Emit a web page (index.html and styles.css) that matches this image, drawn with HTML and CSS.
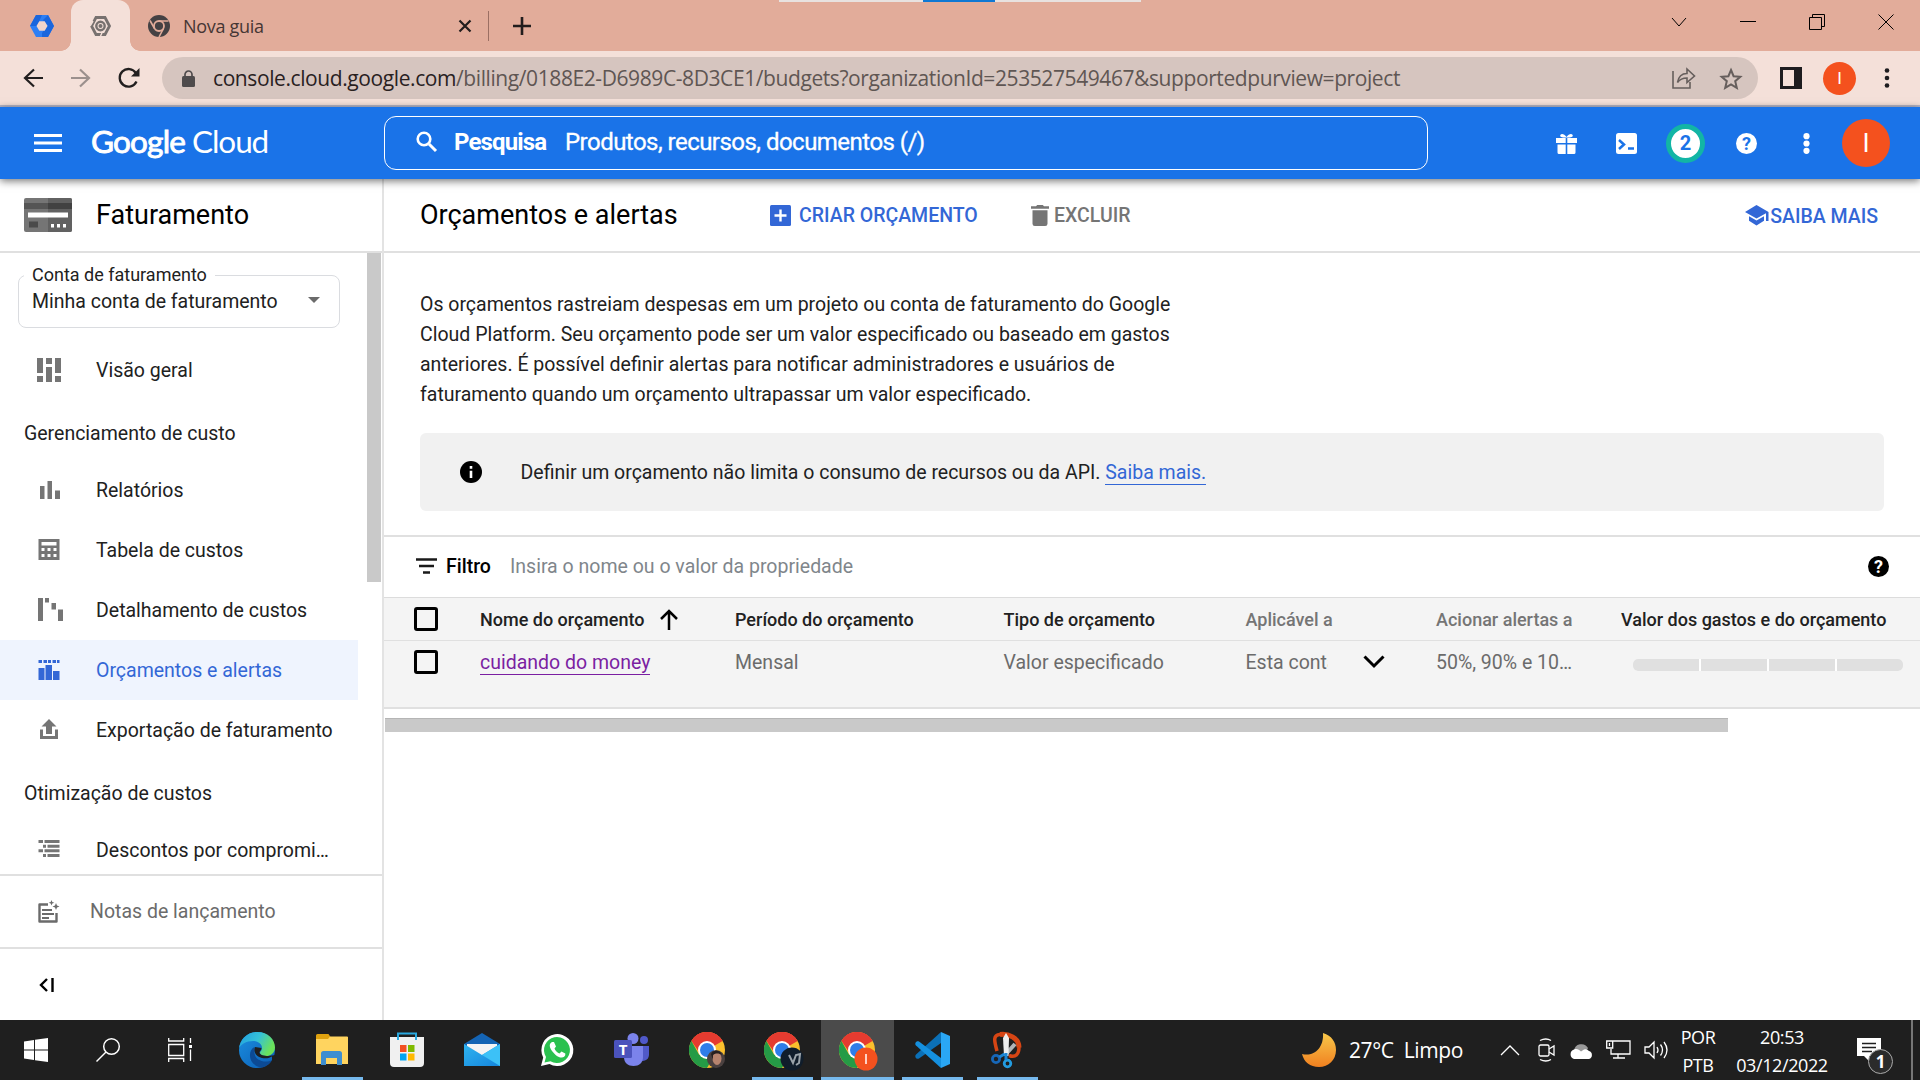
FILE: index.html
```html
<!DOCTYPE html>
<html lang="pt-BR">
<head>
<meta charset="utf-8">
<title>Orçamentos e alertas – Faturamento</title>
<link rel="stylesheet" href="styles.css">
</head>
<body>
<svg width="0" height="0" class="defs">
  <defs>
    <linearGradient id="edge-a" x1="0" y1="0" x2="1" y2=".4"><stop offset="0" stop-color="#1f9de0"/><stop offset=".55" stop-color="#35c1d8"/><stop offset="1" stop-color="#6be25a"/></linearGradient>
    <linearGradient id="edge-b" x1="0" y1="0" x2="1" y2="1"><stop offset="0" stop-color="#1b8fe0"/><stop offset="1" stop-color="#0b5db4"/></linearGradient>
    <linearGradient id="mail-a" x1="0" y1="0" x2="1" y2="1"><stop offset="0" stop-color="#2fb4f0"/><stop offset="1" stop-color="#1585dc"/></linearGradient>
    <linearGradient id="moon-a" x1="0" y1="0" x2="0" y2="1"><stop offset="0" stop-color="#f8c84a"/><stop offset="1" stop-color="#f08020"/></linearGradient>
    <symbol id="chrome" viewBox="0 0 36 36">
      <circle cx="18" cy="18" r="18" fill="#fbc02d"/>
      <path d="M18 18 2.4 9A18 18 0 0 1 33.6 9z" fill="#e53b30"/>
      <path d="M18 9h15.6A18 18 0 0 0 2.4 9L10 20z" fill="#e53b30"/>
      <path d="M2.4 9A18 18 0 0 0 18 36l8-13.500-8 4.500-8-4.500z" fill="#259b46"/>
      <circle cx="18" cy="18" r="9" fill="#fff"/><circle cx="18" cy="18" r="7" fill="#2f7de9"/>
    </symbol>
  </defs>
</svg>

<header class="tabstrip">
  <svg class="tab-icon" width="24" height="24" viewBox="0 0 24 24"><path d="M6 1h12l6 11-6 11H6L0 12z" fill="#2d7ff5"/><path d="M6 1h6l-5 11H0zM18 1l6 11h-6l-5-6zM12 23h6l6-11h-7l-5 7z" fill="#1a66dd"/><path d="M9.300 7.300h5.400l2.800 4.700-2.800 4.700H9.300L6.500 12z" fill="#f1d5cb"/></svg>
  <div class="active-tab"><svg width="21" height="20" viewBox="0 0 21 20"><path d="M6 1.500h9L19.500 10 15 18.500H6L1.500 10z" fill="none" stroke="#77716f" stroke-width="2.800"/><circle cx="10.500" cy="10" r="4.200" fill="none" stroke="#77716f" stroke-width="2.400"/><circle cx="10.500" cy="10" r="1.500" fill="#f4e0d9"/><circle cx="10.500" cy="10" r="2" fill="#77716f"/><path d="M3 5l-3 5M12 17l-1.500 3" stroke="#f4e0d9" stroke-width="1.500"/></svg></div>
  <svg class="ntp-icon" width="22" height="22" viewBox="0 0 22 22"><circle cx="11" cy="11" r="11" fill="#454143"/><path d="M11 6h9.500M6.500 13.500 2 5.500M15.500 13.500 11 22" stroke="#e2ac9a" stroke-width="1.600"/><circle cx="11" cy="11" r="5" fill="#454143" stroke="#e2ac9a" stroke-width="1.800"/></svg>
  <span class="tab-title">Nova guia</span>
  <svg class="tab-close" width="14" height="14" viewBox="0 0 14 14"><path d="m1.500 1.500 11 11m0-11-11 11" stroke="#221d1d" stroke-width="2.200"/></svg>
  <i class="tab-sep"></i>
  <svg width="18" height="18" viewBox="0 0 18 18"><path d="M9 0v18M0 9h18" stroke="#221d1d" stroke-width="2.600"/></svg>
  <div class="share-bar"><i></i></div>
  <div class="window-controls">
    <svg width="16" height="16" viewBox="0 0 16 16"><path d="m1 4 7 8 7-8"/></svg>
    <svg width="16" height="16" viewBox="0 0 16 16"><path d="M0 7.500h16"/></svg>
    <svg width="16" height="16" viewBox="0 0 16 16"><path d="M.5 3.500h12v12H.5zM3.500 3.500v-3h12v12h-3"/></svg>
    <svg width="16" height="16" viewBox="0 0 16 16"><path d="m.5.5 15 15m0-15-15 15"/></svg>
  </div>
</header>

<nav class="toolbar">
  <svg class="nav-back" width="20" height="20" viewBox="0 0 20 20"><path d="M20 10H2m9-8.500L2 10l9 8.500" fill="none" stroke="#221f1f" stroke-width="2.200"/></svg>
  <svg class="nav-fwd" width="20" height="20" viewBox="0 0 20 20"><path d="M0 10h18M9 1.500l9 8.500-9 8.500" fill="none" stroke="#9b908d" stroke-width="2.200"/></svg>
  <svg class="nav-reload" width="22" height="22" viewBox="0 0 22 22"><path d="M18.500 14.500a8.800 8.800 0 1 1-.6-8.500" fill="none" stroke="#221f1f" stroke-width="2.300"/><path d="M21.500 1v8.500H13z" fill="#221f1f"/></svg>
  <div class="omnibox">
    <svg width="13" height="17" viewBox="0 0 13 17"><rect y="6" width="13" height="11" rx="1.500" fill="#4f4b4c"/><path d="M3 7V4.500a3.500 3.500 0 0 1 7 0V7" fill="none" stroke="#4f4b4c" stroke-width="1.700"/></svg>
    <span class="url"><b>console.cloud.google.com</b>/billing/0188E2-D6989C-8D3CE1/budgets?organizationId=253527549467&amp;supportedpurview=project</span>
    <svg class="share" width="24" height="22" viewBox="0 0 24 22"><path d="M1 4v17h17v-6M5.500 15.500C6.500 9.500 10 6.500 15 6.500V2l7.500 7-7.500 6.500V11c-4 0-7 1-9.500 4.500z" fill="none" stroke="#665e5c" stroke-width="1.600"/></svg>
    <svg width="22" height="21" viewBox="0 0 22 21"><path d="m11 2 2.600 6.200 6.700.6-5.100 4.400 1.600 6.600-5.800-3.500-5.800 3.500 1.600-6.600-5.100-4.400 6.700-.6z" fill="none" stroke="#665e5c" stroke-width="2"/></svg>
  </div>
  <svg class="panel" width="22" height="22" viewBox="0 0 22 22"><path d="M1.500 1.500h19v19h-19z" fill="none" stroke="#1d1c1f" stroke-width="3"/><path d="M14 0h8v22h-8z" fill="#1d1c1f"/></svg>
  <span class="profile">I</span>
  <svg width="6" height="20" viewBox="0 0 6 20" fill="#1d1c1f"><circle cx="3" cy="2.500" r="2.300"/><circle cx="3" cy="10" r="2.300"/><circle cx="3" cy="17.500" r="2.300"/></svg>
</nav>

<div class="gc-header">
  <svg class="burger" width="28" height="18" viewBox="0 0 28 18"><path d="M0 1.500h28M0 9h28M0 16.500h28" stroke="#fff" stroke-width="2.800"/></svg>
  <span class="logo"><b>Google</b> Cloud</span>
  <div class="search">
    <svg width="22" height="22" viewBox="0 0 22 22"><circle cx="8" cy="8" r="6.300" fill="none" stroke="#fff" stroke-width="2.600"/><path d="m13 13 7 7" stroke="#fff" stroke-width="3"/></svg>
    <b>Pesquisa</b><span>Produtos, recursos, documentos (/)</span>
  </div>
  <div class="gc-actions">
    <svg width="21" height="21" viewBox="0 0 21 21"><path d="M0 5h9.700v5H0zM11.300 5H21v5h-9.700zM1.500 11.500h8.200V21H3a1.500 1.500 0 0 1-1.500-1.500zM11.300 11.500h8.200v8A1.500 1.500 0 0 1 18 21h-6.700z" fill="#fff"/><path d="M10.500 4.500C5 5 3.500 3.500 4.500 1.800s4-.8 6 2.200c2-3 5-3.900 6-2.200s-.5 3.200-6 2.700z" fill="#fff"/></svg>
    <svg width="21" height="21" viewBox="0 0 21 21"><rect width="21" height="21" rx="2.500" fill="#fff"/><path d="m3 7 5 4.500L3 16M12 15.500h6" fill="none" stroke="#1a73e8" stroke-width="2.500"/></svg>
    <span class="notif">2</span>
    <span class="help">?</span>
    <svg width="7" height="21" viewBox="0 0 7 21" fill="#fff"><circle cx="3.500" cy="3.200" r="3.100"/><circle cx="3.500" cy="10.500" r="3.100"/><circle cx="3.500" cy="17.800" r="3.100"/></svg>
    <span class="avatar">I</span>
  </div>
</div>

<div class="page">
  <aside class="sidebar">
    <div class="product">
      <svg width="48" height="34" viewBox="0 0 48 34"><rect width="48" height="34" rx="2" fill="#757575"/><path d="M24 0h22a2 2 0 0 1 2 2v30a2 2 0 0 1-2 2H24z" fill="#616161"/><path d="M0 5h24v6H0z" fill="#555"/><path d="M24 5h24v6H24z" fill="#424242"/><path d="M4 14.500h40v5H4z" fill="#fff"/><path d="M5 23.500h9v6H5z" fill="#4a4a4a"/><path d="M27 26h3v3.500h-3zM33 26h3v3.500h-3zM39 26h3v3.500h-3z" fill="#fff"/></svg>
      <span>Faturamento</span>
    </div>
    <div class="side-scroll">
      <fieldset class="account"><legend>Conta de faturamento</legend><span>Minha conta de faturamento</span><i></i></fieldset>
      <a class="item"><svg width="26" height="26" viewBox="0 0 26 26"><path d="M1 1h6v15H1zM10 1h6v6h-6zM19 1h6v15h-6zM1 19h6v6H1zM10 10h6v15h-6zM19 19h6v6h-6z"/></svg>Visão geral</a>
      <h4>Gerenciamento de custo</h4>
      <a class="item"><svg width="26" height="26" viewBox="0 0 26 26"><path d="M4 9h4.500v13H4zM11.500 4H16v18h-4.500zM19 13.500h5V22h-5z"/></svg>Relatórios</a>
      <a class="item"><svg width="26" height="26" viewBox="0 0 26 26"><path fill-rule="evenodd" d="M2.500 2h21v21h-21zM5.500 5v3.500h15V5zM5.500 11v3h3v-3zM11.500 11v3h3v-3zM17.500 11v3h3v-3zM5.500 17v3h3v-3zM11.500 17v3h3v-3zM17.500 17v3h3v-3z"/></svg>Tabela de custos</a>
      <a class="item"><svg width="26" height="26" viewBox="0 0 26 26"><path d="M2 1h5v23H2zM9 1h4v4.500H9zM15.500 6H20v6.500h-4.500zM22 12.500h5V24h-5z"/></svg>Detalhamento de custos</a>
      <a class="item current"><svg width="26" height="26" viewBox="0 -3 26 26"><path d="M2.500 0H6v3H2.500zM7.500 0H11v3H7.500zM12 0h3v3h-3zM16.500 0H20v3h-3.500zM21 0h2.500v3H21zM2.500 8h6v12h-6zM9.500 5H16v15H9.500zM17 11h6.500v9H17z"/></svg>Orçamentos e alertas</a>
      <a class="item"><svg width="26" height="26" viewBox="0 0 26 26"><path d="M13 2l7.500 7.500H16V17h-6V9.500H5.500zM4 12.500h3V19h12v-6.500h3V22H4z"/></svg>Exportação de faturamento</a>
      <h4>Otimização de custos</h4>
      <a class="item"><svg width="26" height="26" viewBox="0 0 26 26"><path d="M2.500 3H7v3H2.500zM8.500 3h15v3h-15zM7 7.700h3v3H7zM11.500 7.700h12v3h-12zM2.500 12.300H7v3H2.500zM8.500 12.300h15v3h-15zM7 17h3v3H7zM11.500 17h12v3h-12z"/></svg>Descontos por compromi…</a>
      <i class="side-thumb"></i>
    </div>
    <div class="notes"><svg width="24" height="24" viewBox="0 0 24 24"><path d="M12 4.500H3.500v17h17V13" fill="none" stroke="#6b6b6b" stroke-width="2.400" stroke-linejoin="round"/><path d="M6 10h10M6 14h12M6 18h7" stroke="#6b6b6b" stroke-width="2"/><path d="m15.500 0 .8 2 2 .8-2 .8-.8 2-.8-2-2-.8 2-.8zM20 3l1 2.500 2.500 1-2.500 1-1 2.500-1-2.500-2.500-1 2.500-1z" fill="#6b6b6b"/></svg>Notas de lançamento</div>
    <div class="collapse"><svg width="16" height="14" viewBox="0 0 16 14"><path d="M8 1 2 7l6 6M13.500 0v14" fill="none" stroke="#000" stroke-width="2.400"/></svg></div>
  </aside>

  <main>
    <div class="title-row">
      <h1>Orçamentos e alertas</h1>
      <a class="create"><svg width="21" height="21" viewBox="0 0 21 21"><rect width="21" height="21" rx="1.500" fill="#3367d6"/><path d="M10.500 4.500v12M4.500 10.500h12" stroke="#fff" stroke-width="2.400"/></svg>CRIAR ORÇAMENTO</a>
      <a class="delete"><svg width="18" height="21" viewBox="0 0 18 21" fill="#757575"><path d="M0 1.300h5L6.200 0h5.600L13 1.300h5v2.500H0zM1.500 5.200h15v13.500A2.300 2.300 0 0 1 14.200 21H3.800a2.300 2.300 0 0 1-2.300-2.300z"/></svg>EXCLUIR</a>
      <a class="learn"><svg width="24" height="21" viewBox="0 0 24 21" fill="#3367d6"><path d="M11.500 0 23.500 7v9H21V8.300l-9.500 5.200L0 7zM4 11.200l7.500 4.300 7.500-4.300v4.500L11.500 20.500 4 15.800z"/></svg><span>SAIBA MAIS</span></a>
    </div>
    <p class="intro">Os orçamentos rastreiam despesas em um projeto ou conta de faturamento do Google<br>Cloud Platform. Seu orçamento pode ser um valor especificado ou baseado em gastos<br>anteriores. É possível definir alertas para notificar administradores e usuários de<br>faturamento quando um orçamento ultrapassar um valor especificado.</p>
    <div class="info"><svg width="22" height="22" viewBox="0 0 22 22"><circle cx="11" cy="11" r="11"/><path d="M9.700 9.700h2.600V17H9.700zM9.700 5h2.600v2.700H9.700z" fill="#fff"/></svg><span>Definir um orçamento não limita o consumo de recursos ou da API. <a>Saiba mais.</a></span></div>
    <div class="filter">
      <svg width="21" height="16" viewBox="0 0 21 16"><path d="M0 1.500h21M3 8h15M7 14.500h7" stroke="#1a1a1a" stroke-width="2.600"/></svg>
      <b>Filtro</b><span>Insira o nome ou o valor da propriedade</span><i class="help dark">?</i>
    </div>
    <div class="grid head">
      <i class="box"></i>
      <span>Nome do orçamento<svg width="18" height="21" viewBox="0 0 18 21"><path d="M9 21V2M1 10l8-8 8 8" fill="none" stroke="#000" stroke-width="2.500"/></svg></span>
      <span>Período do orçamento</span><span>Tipo de orçamento</span><span class="muted">Aplicável a</span><span class="muted">Acionar alertas a</span><span>Valor dos gastos e do orçamento</span>
    </div>
    <div class="grid row">
      <i class="box"></i>
      <span><a>cuidando do money</a></span>
      <span>Mensal</span><span>Valor especificado</span>
      <span class="scope"><em>Esta conta</em><svg width="22" height="14" viewBox="0 0 22 14"><path d="m1.500 1.500 9.500 9.500 9.500-9.500" fill="none" stroke="#000" stroke-width="3"/></svg></span>
      <span>50%, 90% e 10…</span>
      <span class="meter"><i></i><i></i><i></i><i></i></span>
    </div>
    <div class="hscroll"></div>
  </main>
</div>

<footer class="taskbar">
  <div class="cell sys"><svg width="24" height="24" viewBox="0 0 24 24" fill="#fff"><path d="M0 3.400 10 2v9.400H0zM11 1.800 24 0v11.400H11zM0 12.400h10V22L0 20.600zM11 12.400h13V24l-13-1.800z"/></svg></div>
  <div class="cell sys"><svg width="24" height="24" viewBox="0 0 24 24" fill="none" stroke="#fff" stroke-width="1.500"><circle cx="15.500" cy="8.500" r="7.800"/><path d="M10 14 .5 23.500"/></svg></div>
  <div class="cell sys"><svg width="24" height="24" viewBox="0 0 24 24" fill="none" stroke="#fff" stroke-width="1.300"><path d="M.7 0v3h15V0M.7 24v-3.500h15V24M.7 6.500h15v11H.7zM22.500 0v5M22.500 11.500V23"/><path d="M21 7h3v3h-3z" fill="#fff" stroke="none"/></svg></div>
  <div class="apps">
    <div class="cell"><svg width="36" height="36" viewBox="0 0 36 36"><circle cx="18" cy="18" r="18" fill="url(#edge-b)"/><path d="M0 17C1 7 8.500 0 18.500 0 29 0 36 7.500 36 15.500c0 6-5 8.500-9 8.500-4 0-6-1.500-6-3 0-1.500 2-2 2-5 0-4-4-7-9-7C7.500 9 1 12.500 0 17z" fill="url(#edge-a)"/><path d="M15.500 15c-7 3-7 19 8 20.500 4-1 8-4 9.500-7.500-6 3.500-17 1-17.500-7z" fill="#0c4a94"/><path d="M16 15c-1 2-1.500 9 7 11 5 1 8-.5 10-1.500v3.500l3.500 2V23l-7 1c-4 0-9-1-9-3.500 0-1.500 2-2 2-4.500z" fill="#1f1f1f"/></svg></div>
    <div class="cell open"><svg width="32" height="32" viewBox="0 0 32 32"><path d="M0 1.500A1.500 1.500 0 0 1 1.500 0h11l2 3H32v22.500H0z" fill="#dfa20f"/><path d="M0 5h12l2-2.500h17a1 1 0 0 1 1 1V30H0z" fill="#ffd45f"/><path d="M5 31V19.500A2.500 2.500 0 0 1 7.500 17h16a2.500 2.500 0 0 1 2.500 2.500V31h-5v-7H10v7z" fill="#3e8ed0"/></svg></div>
    <div class="cell"><svg width="36" height="36" viewBox="0 0 36 36"><path d="M1 5h34v26a4 4 0 0 1-4 4H5a4 4 0 0 1-4-4z" fill="#f0f0f0"/><path d="M11 13h6.500v7H11z" fill="#f25022"/><path d="M19 13h6.500v7H19z" fill="#7fba00"/><path d="M11 21.500h6.500v7H11z" fill="#00a4ef"/><path d="M19 21.500h6.500v7H19z" fill="#ffb900"/><path d="M9 8V1.500h18V8" fill="none" stroke="#2aa9e0" stroke-width="2"/></svg></div>
    <div class="cell"><svg width="36" height="34" viewBox="0 0 36 34"><path d="M0 11 18 0l18 11v10H0z" fill="#1464b4"/><path d="M3 11h30v12H3z" fill="#f4f4f4"/><path d="M0 11l18 11 18-11v22H0z" fill="url(#mail-a)"/><path d="M18 22 36 11v22z" fill="#3cc1f7"/></svg></div>
    <div class="cell"><svg width="34" height="34" viewBox="0 0 34 34"><path d="M1 33l2.200-8.500A16 16 0 1 1 9.500 31z" fill="#fff"/><path d="m4.500 29.500 1.500-5.500a13 13 0 1 1 4.500 4.300z" fill="#2bc14f"/><path d="M12 9c-3 1.500-3 5 0 9s7 7 10 6.500 3.500-2 3.300-4l-3.800-2-2 2c-2-.5-4.500-3-5-5l1.500-2L14 9z" fill="#fff"/></svg></div>
    <div class="cell"><svg width="36" height="34" viewBox="0 0 36 34"><circle cx="19" cy="5.500" r="5.500" fill="#7b83eb"/><circle cx="30" cy="7" r="4" fill="#5059c9"/><path d="M25 13h10v9a6.500 6.500 0 0 1-10 5z" fill="#5059c9"/><path d="M10 13h19v11c0 6-4 9-9.500 9S10 30 10 24z" fill="#7b83eb"/><rect y="7" width="18" height="18" rx="1.500" fill="#4b53bc"/><text x="9" y="21.500" class="t-glyph">T</text></svg></div>
    <div class="cell"><svg width="36" height="36"><use href="#chrome"/><circle cx="27" cy="27" r="9" fill="#4b4140"/><ellipse cx="28" cy="26.500" rx="4.500" ry="6.500" fill="#b7846e"/><path d="M22 22c2-5 10-4 11 1-3-2-7-2-9 0v5z" fill="#262020"/></svg></div>
    <div class="cell open"><svg width="40" height="40" class="badge"><use href="#chrome" width="36" height="36"/><circle cx="28" cy="27" r="11.500" fill="#101d2b"/><path d="m25 23 4 8 3-8 4-1-1 9-3 2" fill="none" stroke="#9aa3aa" stroke-width="2"/></svg></div>
    <div class="cell open focused"><svg width="40" height="40" class="badge"><use href="#chrome" width="36" height="36"/><circle cx="27" cy="27" r="11.500" fill="#f4511e"/><path d="M27 22v10" stroke="#ffd1c4" stroke-width="2"/></svg></div>
    <div class="cell open"><svg width="36" height="36" viewBox="0 0 36 36"><path d="m27 0-25 22.500c-2 2 .5 5.500 3 4L27 11z" fill="#0b70b7"/><path d="M27 36 2 13.500c-2-2 .5-5.500 3-4L27 26z" fill="#1590df"/><path d="M27 0 36 4v28l-9 4z" fill="#2aa7f5"/></svg></div>
    <div class="cell open"><svg width="32" height="36" viewBox="0 0 32 36"><path d="M6 19C3 8 2 3 9 2.500S28 5 28 15c0 7-3 11-10 8.500" fill="none" stroke="#d64514" stroke-width="3.500"/><path d="M9 2.500c8-1 19 3 19 13" fill="none" stroke="#d64514" stroke-width="5"/><path d="M15 22 24 12" stroke="#b0b4b7" stroke-width="4"/><path d="m15 1 3 5-.5 18H13L12 6z" fill="#eee"/><circle cx="5" cy="27" r="3.600" fill="none" stroke="#1767b8" stroke-width="2.800"/><circle cx="16.500" cy="31.500" r="3.300" fill="none" stroke="#239ce0" stroke-width="2.800"/><path d="m8.500 25 5-3M15 28v-7" stroke="#1c86d4" stroke-width="3"/></svg></div>
  </div>
  <svg class="moon" width="34" height="34" viewBox="0 0 34 34"><path d="M21 0c9 3 13 9 13 17 0 10-7.500 17-17 17-9 0-15-5-17-13 12 3 22-6 21-21z" fill="url(#moon-a)"/></svg>
  <span class="weather">27°C&nbsp; Limpo</span>
  <div class="tray">
    <svg class="more" width="20" height="12" viewBox="0 0 20 12"><path d="m1 11 9-9 9 9"/></svg>
    <svg width="18" height="22" viewBox="0 0 18 22"><rect x="1" y="6" width="10" height="11" rx="1.500"/><path d="m11 10 5-3v9l-5-3M2 1.500Q8-1.500 13 1.500M2 20.500q6 3 11 0"/></svg>
    <svg width="24" height="17" viewBox="0 0 24 17"><path d="M5 9a7.500 7.500 0 0 1 14-3l-3 6H7z" fill="#999" stroke="none"/><path d="M5 17a5 5 0 0 1 0-9.500c3-1 5 0 7 2l3-2a5 5 0 0 1 5 1.500 4.200 4.200 0 0 1 0 8z" fill="#fff" stroke="none"/></svg>
    <svg width="25" height="20" viewBox="0 0 25 20"><path d="M7 1h17v13H5V9M7 18h12M12 14v4M.7 1h6v7h-6zM3.500 3v3"/></svg>
    <svg width="24" height="20" viewBox="0 0 24 20"><path d="M1 7h4l5-5v16l-5-5H1zM13 7q2 3 0 6M16.500 4.500q4 5.500 0 11M20 2q6 8 0 16"/></svg>
  </div>
  <div class="stack lang"><span>POR</span><span>PTB</span></div>
  <div class="stack clock"><span>20:53</span><span>03/12/2022</span></div>
  <div class="action"><svg width="24" height="24" viewBox="0 0 24 24"><path d="M0 0h24v18H12v5l-5-5H0z" fill="#fff"/><path d="M5 5.500h14M5 9.500h14M5 13.500h10" stroke="#1f1f1f" stroke-width="1.300"/></svg><b>1</b></div>
</footer>
</body>
</html>
```
FILE: styles.css
```css
* { box-sizing: border-box; }
body { margin: 0; width: 1920px; height: 1080px; overflow: hidden; display: flex; flex-direction: column; font-family: Roboto, sans-serif; font-size: 19.5px; color: #212121; background: #fff; }
svg { display: block; flex: none; overflow: visible; }
.defs { position: absolute; }
i, em { font-style: normal; }

/* Browser chrome */
.tabstrip { position: relative; flex: none; height: 51px; background: #e2ac9a; display: flex; align-items: center; padding-left: 30px; font-family: "Open Sans", sans-serif; }
.active-tab { position: relative; width: 59px; height: 51px; margin-left: 17px; background: #f4e0d9; border-radius: 12px 12px 0 0; display: flex; align-items: center; justify-content: center; }
.active-tab::before, .active-tab::after { content: ""; position: absolute; bottom: 0; width: 10px; height: 10px; }
.active-tab::before { left: -10px; background: radial-gradient(circle at 0 0, transparent 9.500px, #f4e0d9 10px); }
.active-tab::after { right: -10px; background: radial-gradient(circle at 100% 0, transparent 9.500px, #f4e0d9 10px); }
.ntp-icon { margin-left: 18px; }
.tab-title { margin-left: 13px; width: 275px; font-size: 18px; letter-spacing: -.3px; color: #453634; }
.tab-sep { width: 1px; height: 30px; background: #9b6f63; margin: 0 24px 0 16px; }
.share-bar { position: absolute; left: 779px; top: 0; width: 362px; height: 2px; background: #e8e2e0; }
.share-bar i { display: block; width: 72px; height: 2px; margin-left: 144px; background: #0f78d4; }
.window-controls { margin-left: auto; padding: 0 26px 8px 0; display: flex; gap: 53px; fill: none; stroke: #000; stroke-width: 1; }
.toolbar { flex: none; height: 56px; background: #f4e0d9; border-bottom: 2px solid #b5b5c6; display: flex; align-items: center; padding-left: 23px; }
.nav-fwd { margin-left: 28px; }
.nav-reload { margin-left: 27px; }
.omnibox { width: 1596px; height: 42px; margin-left: 22px; border-radius: 21px; background: #d6c5bf; display: flex; align-items: center; padding: 0 16px 0 20px; }
.url { margin-left: 18px; font-family: "Open Sans", sans-serif; font-size: 21px; letter-spacing: -.41px; white-space: nowrap; color: #5f5653; }
.url b { font-weight: 400; color: #29211f; }
.share { margin-left: auto; margin-right: 24px; }
.panel { margin-left: 22px; }
.profile { width: 33px; height: 33px; border-radius: 50%; background: #f4511e; color: #fff; font-size: 17px; display: flex; align-items: center; justify-content: center; margin: 0 28px 0 21px; }

/* Google Cloud bar */
.gc-header { position: relative; z-index: 2; flex: none; height: 72px; background: #1a73e8; box-shadow: 0 2px 8px rgba(0,0,0,.55); display: flex; align-items: center; padding-left: 34px; color: #fff; }
.logo { margin-left: 29px; width: 293px; padding-bottom: 5px; font-family: Lato, sans-serif; font-size: 31.500px; letter-spacing: -1.100px; white-space: nowrap; }
.logo b { font-weight: 400; letter-spacing: -.8px; -webkit-text-stroke: .9px #fff; }
.search { width: 1044px; height: 54px; border: 1.500px solid #fff; border-radius: 12px; display: flex; align-items: center; padding: 0 0 2px 31px; font-size: 24px; letter-spacing: -.53px; }
.search b { margin-left: 16px; width: 111px; font-weight: 700; letter-spacing: -.85px; }
.search span { -webkit-text-stroke: .3px #fff; }
.gc-actions { display: flex; align-items: center; margin-left: 128px; }
.notif { width: 39px; height: 39px; margin-left: 29px; border-radius: 50%; border: 5px solid #12b5a5; background: #fff; color: #1a73e8; font-weight: 700; font-size: 20px; display: flex; align-items: center; justify-content: center; }
.gc-actions svg + svg { margin-left: 39px; }
.help { width: 21px; height: 21px; margin: 0 46px 0 31px; border-radius: 50%; background: #fff; color: #1a73e8; font-size: 18px; font-weight: 700; display: flex; align-items: center; justify-content: center; }
.avatar { width: 48px; height: 48px; margin-left: 32px; border-radius: 50%; background: #f4511e; font-size: 26px; display: flex; align-items: center; justify-content: center; }

/* Layout */
.page { flex: 1; display: flex; min-height: 0; }
.sidebar { width: 384px; border-right: 2px solid #e3e3e3; display: flex; flex-direction: column; }
.product { height: 74px; flex: none; border-bottom: 2px solid #e0e0e0; display: flex; align-items: center; padding-left: 24px; font-size: 27px; color: #000; gap: 24px; }
.side-scroll { position: relative; flex: 1; min-height: 0; overflow: hidden; border-bottom: 2px solid #e0e0e0; }
.account { margin: 11px 0 12px 18px; width: 322px; height: 64px; padding: 0 19px 0 11px; border: 1.500px solid #dadce0; border-radius: 8px; display: flex; justify-content: space-between; white-space: nowrap; }
.account legend { font-size: 18px; line-height: 22px; padding: 0 8px; margin-left: -6px; }
.account span { line-height: 30px; margin-top: 1px; padding-left: 2px; }
.account i { border: 6px solid transparent; border-top-color: #6b6b6b; height: 0; margin-top: 11px; }
.item { display: flex; align-items: center; width: 358px; height: 60px; padding-left: 35.500px; gap: 34.500px; white-space: nowrap; }
.item svg { fill: #757575; }
.current { background: #eff4fe; color: #3367d6; }
.current svg { fill: #3367d6; }
h4 { margin: 0; height: 60px; padding: 4px 0 0 24px; line-height: 60px; font-weight: 400; }
.side-thumb { position: absolute; left: 367px; top: 0; width: 14px; height: 329px; background: #c9c9c9; }
.notes { flex: none; height: 73px; border-bottom: 2px solid #e0e0e0; display: flex; align-items: center; padding-left: 36px; gap: 30px; color: #6b6b6b; }
.collapse { flex: none; height: 71px; padding: 29px 0 0 39px; }
main { flex: 1; min-width: 0; }
.title-row { height: 74px; border-bottom: 2px solid #e0e0e0; display: flex; align-items: center; padding: 0 42px 0 36px; font-weight: 500; white-space: nowrap; }
h1 { margin: 0; width: 350px; font-size: 27px; font-weight: 400; color: #000; }
.title-row a { display: flex; align-items: center; }
.title-row .create { color: #3367d6; gap: 8px; width: 261px; }
.title-row .delete { color: #757575; gap: 5px; }
.title-row .learn { color: #3367d6; gap: 1px; margin-left: auto; }
.learn span { padding-top: 3px; }
.intro { margin: 37px 0 23px 36px; line-height: 30px; white-space: nowrap; }
.info { margin: 0 36px 24px; height: 78px; background: #f1f1f1; border-radius: 6px; display: flex; align-items: center; padding-left: 40px; gap: 38.500px; white-space: nowrap; }
.info a { color: #3367d6; border-bottom: 1.500px solid #3367d6; }
.filter { height: 62px; border-top: 2px solid #e0e0e0; display: flex; align-items: center; padding: 0 0 2px 32px; }
.filter b { font-weight: 500; color: #000; margin-left: 9px; width: 64px; }
.filter span { color: #80868b; }
.filter .dark { margin: 0 31px 0 auto; background: #000; color: #fff; }
.grid { display: grid; grid-template-columns: 66px 255px 268.500px 242px 190.500px 185px 1fr; padding-left: 30px; background: #f4f4f4; white-space: nowrap; }
.head { height: 44px; border-top: 1px solid #dcdcdc; border-bottom: 1px solid #e0e0e0; align-items: center; font-size: 18px; font-weight: 500; color: #212121; }
.head span:nth-child(2) { display: flex; gap: 16px; align-items: center; }
.head .muted { color: #757575; }
.row { height: 68px; border-bottom: 2px solid #e0e0e0; line-height: 44px; color: #6b6b6b; }
.row a { color: #7b1fa2; border-bottom: 1.500px solid #7b1fa2; }
.box { width: 24px; height: 24px; border: 3px solid #000; border-radius: 3px; }
.row .box { margin-top: 9px; }
.scope { display: flex; gap: 35px; }
.scope em { width: 82px; overflow: hidden; }
.scope svg { margin-top: 14px; }
.meter { width: 270px; height: 12px; margin: 18px 0 0 12px; display: grid; grid-template-columns: repeat(4, 1fr); gap: 2px; background: #fff; border-radius: 5px; overflow: hidden; }
.meter i { background: #e0e0e0; }
.hscroll { width: 1343px; height: 14px; margin: 9px 0 0 1px; background: #c9c9c9; border-top: 1px solid #b5b5b5; }

/* Windows taskbar */
.taskbar { flex: none; height: 60px; background: #1f1f1f; display: flex; align-items: center; color: #fff; font-family: "Open Sans", sans-serif; }
.cell { width: 73px; height: 60px; position: relative; display: flex; align-items: center; justify-content: center; }
.sys { width: 72px; }
.apps { display: flex; gap: 2px; margin-left: 5px; }
.apps .cell { padding-right: 2px; }
.open::after { content: ""; position: absolute; left: 6px; right: 6px; bottom: 0; height: 3px; background: #76b9ed; }
.focused { background: #4b4b4b; }
.focused::after { left: 0; right: 0; }
.badge { margin: 4px 0 0 4px; }
.t-glyph { font: 700 15px "Open Sans", sans-serif; fill: #fff; text-anchor: middle; }
.moon { margin-left: 258px; }
.weather { margin-left: 13px; width: 151px; font-size: 21px; letter-spacing: -.4px; white-space: nowrap; }
.tray { display: flex; align-items: center; gap: 13px; width: 167px; fill: none; stroke: #fff; stroke-width: 1.300; }
.more { margin-right: 5px; }
.stack { display: flex; flex-direction: column; align-items: center; font-size: 18px; letter-spacing: -.4px; line-height: 28px; padding-top: 1px; white-space: nowrap; }
.lang { width: 62px; }
.clock { width: 106px; }
.action { position: relative; margin-left: 22px; width: 56px; border-right: 2px solid #777; height: 60px; padding-top: 18px; }
.action b { position: absolute; left: 11px; top: 29px; width: 25px; height: 25px; border-radius: 50%; border: 1px solid #aaa; background: #2b2b2b; font-size: 17px; line-height: 23px; text-align: center; }
```
